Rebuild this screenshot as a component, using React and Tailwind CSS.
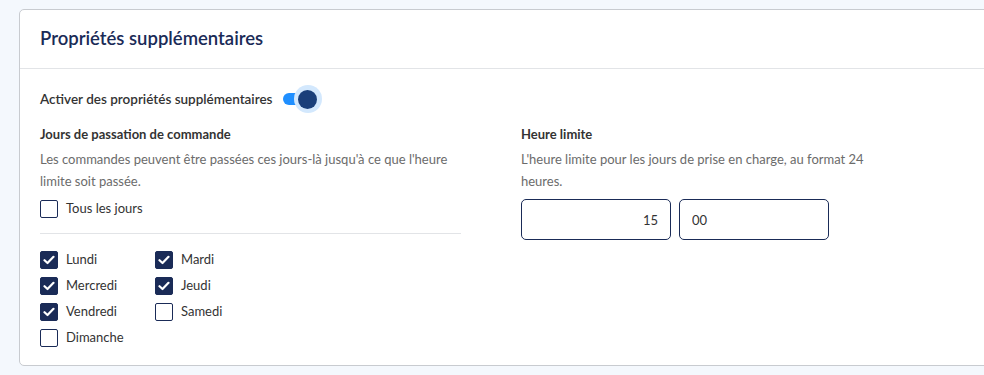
import React, { useState } from 'react';

const navy = 'text-[#1a2b57]';

const Check = ({ checked, label, onChange }) => (
  <label className="flex items-center gap-[8px] h-[26px] cursor-pointer select-none">
    <span
      onClick={onChange}
      className={
        'w-[18px] h-[18px] rounded-[2px] border-[1.5px] border-[#1a2b57] flex items-center justify-center ' +
        (checked ? 'bg-[#1a2b57]' : 'bg-white')
      }
    >
      {checked && (
        <svg width="12" height="10" viewBox="0 0 12 10" fill="none">
          <path d="M1.5 5.2 4.5 8 10.5 1.8" stroke="white" strokeWidth="2.2" strokeLinecap="round" strokeLinejoin="round" />
        </svg>
      )}
    </span>
    <span className="text-[13px] text-[#333]">{label}</span>
  </label>
);

export default function App() {
  const [days, setDays] = useState({
    Lundi: true, Mardi: true, Mercredi: true, Jeudi: true,
    Vendredi: true, Samedi: false, Dimanche: false,
  });
  const toggle = (d) => setDays({ ...days, [d]: !days[d] });

  return (
    <div className="h-[375px] overflow-hidden bg-[#f4f8fd] pt-[9px] pl-[19px] font-['Lato',sans-serif]">
      <div className="w-[1000px] bg-white border border-[#c8cbd0] rounded-[5px]">
        <div className="h-[59px] flex items-center px-[20px] border-b border-[#e2e4e7]">
          <h1 className={`text-[18.5px] font-semibold ${navy}`}>Propriétés supplémentaires</h1>
        </div>

        <div className="px-[20px] pt-[16px] pb-[14px]">
          <div className="flex items-center h-[28px]">
            <span className="text-[13.5px] font-semibold text-[#333]">Activer des propriétés supplémentaires</span>
            <span className="relative ml-[10px] w-[30px] h-[12px] rounded-full bg-[#1f8fff]">
              <span className="absolute right-[-9px] top-[-8px] w-[28px] h-[28px] rounded-full bg-[#d3e8fd] flex items-center justify-center">
                <span className="w-[19px] h-[19px] rounded-full bg-[#1a3f7a]" />
              </span>
            </span>
          </div>

          <div className="flex mt-[10px]">
            <div className="w-[421px]">
              <div className="text-[13px] font-bold text-[#333] leading-[22px]">Jours de passation de commande</div>
              <p className="mt-[3px] text-[13px] text-[#6b6b6b] leading-[22px]">
                Les commandes peuvent être passées ces jours-là jusqu'à ce que l'heure limite soit passée.
              </p>
              <div className="mt-[4px]">
                <Check checked={false} label="Tous les jours" />
              </div>
              <div className="mt-[11px] mb-[13px] border-t border-[#e2e4e7]" />
              <div className="grid grid-cols-[115px_115px]">
                {['Lundi', 'Mardi', 'Mercredi', 'Jeudi', 'Vendredi', 'Samedi', 'Dimanche'].map((d) => (
                  <Check key={d} checked={days[d]} label={d} onChange={() => toggle(d)} />
                ))}
              </div>
            </div>

            <div className="ml-[60px] w-[360px]">
              <div className="text-[13px] font-bold text-[#333] leading-[22px]">Heure limite</div>
              <p className="mt-[3px] text-[13px] text-[#6b6b6b] leading-[22px]">
                L'heure limite pour les jours de prise en charge, au format 24 heures.
              </p>
              <div className="flex gap-[8px] mt-[7px]">
                <input
                  defaultValue="15"
                  className="w-[150px] h-[41px] rounded-[5px] border border-[#1a2b57] px-[12px] text-right text-[13px] text-[#333] outline-none"
                />
                <input
                  defaultValue="00"
                  className="w-[150px] h-[41px] rounded-[5px] border border-[#1a2b57] px-[12px] text-[13px] text-[#333] outline-none"
                />
              </div>
            </div>
          </div>
        </div>
      </div>
    </div>
  );
}
